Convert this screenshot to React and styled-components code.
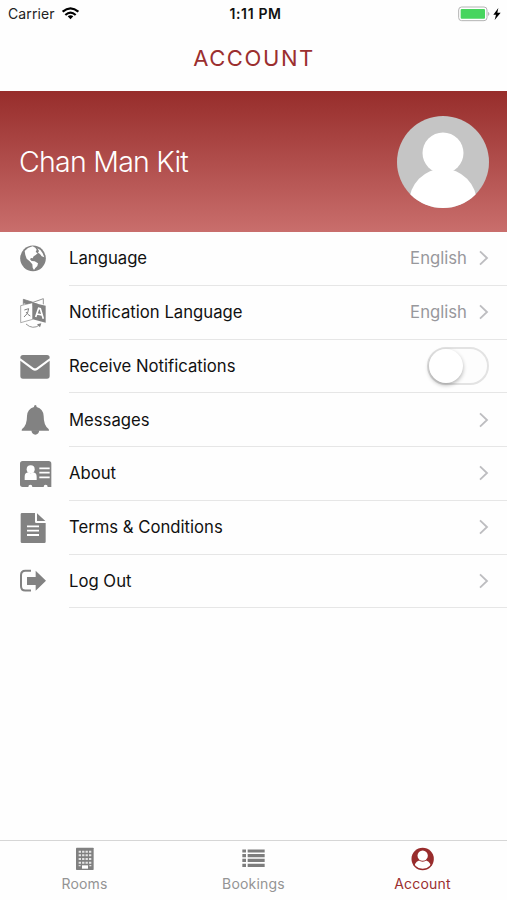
import React, { useState } from "react";
import styled, { createGlobalStyle } from "styled-components";

const GRAY = "#828282";
const RED = "#9b2f2f";

const App = () => {
  const [notify, setNotify] = useState(false);

  return (
    <>
      <GlobalStyle />
      <Screen>
        <StatusBar>
          <Carrier>
            <span>Carrier</span>
            <WifiIcon />
          </Carrier>
          <Clock>1:11 PM</Clock>
          <Power>
            <BatteryIcon />
          </Power>
        </StatusBar>
        <Title>ACCOUNT</Title>
        <Profile>
          <Name>Chan Man Kit</Name>
          <Avatar />
        </Profile>
        <List>
          {rows.map((row) => (
            <Row key={row.label}>
              <IconCell viewBox="0 0 96 96">{row.icon}</IconCell>
              <RowBody>
                <RowLabel>{row.label}</RowLabel>
                {row.value && <RowValue>{row.value}</RowValue>}
                {row.toggle ? (
                  <Toggle
                    role="switch"
                    aria-checked={notify}
                    $on={notify}
                    onClick={() => setNotify(!notify)}
                  >
                    <Knob $on={notify} />
                  </Toggle>
                ) : (
                  <Chevron />
                )}
              </RowBody>
            </Row>
          ))}
        </List>
        <TabBar>
          {tabs.map((tab) => (
            <Tab key={tab.label} $active={tab.active}>
              <TabIcon viewBox="0 0 72 72">{tab.icon}</TabIcon>
              <TabLabel>{tab.label}</TabLabel>
            </Tab>
          ))}
        </TabBar>
      </Screen>
    </>
  );
};

const WifiIcon = () => (
  <svg width="17" height="13" viewBox="0 0 51 39" fill="none" stroke="#000" strokeWidth="6.500">
    <path d="M2 14 Q25.500 -6 49 14" />
    <path d="M10 24 Q25.500 10 41 24" />
    <path d="M17 28 Q25.500 21 34 28 L25.500 37 Z" fill="#000" stroke="none" />
  </svg>
);

const BatteryIcon = () => (
  <svg width="44" height="16" viewBox="0 0 132 48">
    <rect x="2" y="3" width="85" height="41" rx="9" fill="#fff" stroke="#b4b4b4" strokeWidth="3" />
    <rect x="8" y="9" width="73" height="29" rx="3" fill="#47d55e" />
    <path d="M91 17 Q97 23.500 91 30 Z" fill="#999" />
    <path d="M121 6 L106 26 H114 L110 42 L128 20 H118 Z" fill="#000" />
  </svg>
);

const Avatar = () => (
  <svg width="92" height="92" viewBox="0 0 92 92">
    <clipPath id="face">
      <circle cx="46" cy="46" r="46" />
    </clipPath>
    <g clipPath="url(#face)">
      <rect width="92" height="92" fill="#c5c5c5" />
      <circle cx="46" cy="37" r="20.5" fill="#fff" />
      <ellipse cx="46" cy="87.500" rx="34" ry="35" fill="#fff" />
    </g>
  </svg>
);

const Chevron = () => (
  <ChevronSvg viewBox="0 0 30 48">
    <path d="M3 4 L24 24 L3 44" fill="none" stroke="#bdbdc0" strokeWidth="5.500" />
  </ChevronSvg>
);

const globe = (
  <>
    <circle cx="39" cy="46" r="38.500" fill={GRAY} />
    <path
      d="M14 24 L24 15 L38 10 L46 14 L50 20 L47 27 L53 31 L47 36 L41 40 L38 46 L33 45 L30 49 L35 54 L44 55 L54 61 L52 69 L46 75 L42 81 L38 74 L37 64 L29 55 L20 47 L16 36 Z"
      fill="#fff"
    />
    <path d="M52 16 L61 21 L68 31 L73 43 L65 40 L60 33 L54 29 L57 24 Z" fill="#fff" />
  </>
);

const translate = (
  <>
    <path d="M10 23 V7 L39 16 L70 5 V22" fill="none" stroke={GRAY} strokeWidth="2.500" />
    <path d="M10 7 L39 16 L57 22 L39 27 L10 19 Z" fill={GRAY} />
    <path d="M2 26 L38 17 V67 L2 77 Z" fill="#fff" stroke={GRAY} strokeWidth="2" />
    <path d="M38 17 L77 26 V77 L38 67 Z" fill={GRAY} />
    <path
      d="M13 39 L26 35 Q26 50 12 60 M18 45 Q24 54 31 57"
      fill="none"
      stroke={GRAY}
      strokeWidth="3"
    />
    <path d="M47 60 L56 34 L61 35 L70 65 M51 51 L66 54" fill="none" stroke="#fff" strokeWidth="5" />
    <path d="M18 81 Q38 99 59 84" fill="none" stroke={GRAY} strokeWidth="2.500" />
    <path d="M51 82 L64 79 L60 91 Z" fill={GRAY} />
  </>
);

const envelope = (
  <>
    <path d="M9 15 H81 Q89 15 89 23 V25 L50 53 Q45 56 40 53 L1 25 V23 Q1 15 9 15 Z" fill={GRAY} />
    <path d="M1 32 L38 60 Q45 64 52 60 L89 32 V78 Q89 86 81 86 H9 Q1 86 1 78 Z" fill={GRAY} />
  </>
);

const bell = (
  <>
    <path
      d="M42 9 Q42 3 46 3 Q50 3 50 9 Q70 15 71 36 Q71 64 85 74 Q87 76 87 80 H5 Q5 76 7 74 Q21 64 21 36 Q22 15 42 9 Z"
      fill={GRAY}
    />
    <path d="M34 79 H58 Q56 92 46 92 Q36 92 34 79 Z" fill={GRAY} />
  </>
);

const card = (
  <>
    <path
      d="M8 9 H86 Q94 9 94 17 V87 H83 Q83 80 77 80 Q71 80 71 87 H37 Q37 80 31 80 Q25 80 25 87 H8 Q0 87 0 79 V17 Q0 9 8 9 Z"
      fill={GRAY}
    />
    <circle cx="32" cy="34" r="12" fill="#fff" />
    <path d="M14 66 V56 Q14 44 25 43 Q32 49 39 43 Q50 44 50 56 V66 Z" fill="#fff" />
    <path d="M58 31 H89 M58 44 H89 M58 58 H89" stroke="#fff" strokeWidth="5" />
  </>
);

const documentIcon = (
  <>
    <path d="M6 3 H45 V29 Q45 33 49 33 H77 V89 Q77 93 73 93 H6 Q2 93 2 89 V7 Q2 3 6 3 Z" fill={GRAY} />
    <path d="M51 4 L76 27 H51 Z" fill={GRAY} />
    <path d="M21 43 H57 M21 56 H57 M21 69 H57" stroke="#fff" strokeWidth="5.500" />
  </>
);

const logout = (
  <>
    <path d="M33 17.500 H16 Q3 17.500 3 31 V63 Q3 76.500 16 76.500 H33" fill="none" stroke={GRAY} strokeWidth="6" />
    <path d="M21 36 H47 V17 L78 47 L47 77 V60 H21 Z" fill={GRAY} />
  </>
);

const rooms = (
  <>
    <rect x="9" y="2" width="53" height="67" rx="2" fill="#808080" />
    <path
      d="M17 14 H55 M17 25 H55 M17 36 H55 M17 47 H55"
      stroke="#e4e4e4"
      strokeWidth="6"
      strokeDasharray="7 3.300"
    />
    <path d="M17 56 H23 M49 56 H55" stroke="#ddd" strokeWidth="4" />
    <rect x="27" y="55" width="18" height="10" fill="#fff" />
  </>
);

const bookings = (
  <path
    d="M1 12 H12 M17 12 H68 M1 26 H12 M17 26 H68 M1 40 H12 M17 40 H68 M1 55 H12 M17 55 H68"
    stroke="#7d7d7d"
    strokeWidth="9.500"
  />
);

const account = (
  <>
    <clipPath id="ring">
      <circle cx="35" cy="36" r="29.500" />
    </clipPath>
    <circle cx="35" cy="36" r="33.500" fill="#982c2c" />
    <g clipPath="url(#ring)">
      <ellipse cx="35" cy="60" rx="25" ry="22" fill="#fff" />
      <circle cx="35" cy="27" r="17.500" fill="#982c2c" />
      <circle cx="35" cy="26" r="15.500" fill="#fff" />
    </g>
  </>
);

const rows = [
  { label: "Language", value: "English", icon: globe },
  { label: "Notification Language", value: "English", icon: translate },
  { label: "Receive Notifications", toggle: true, icon: envelope },
  { label: "Messages", icon: bell },
  { label: "About", icon: card },
  { label: "Terms & Conditions", icon: documentIcon },
  { label: "Log Out", icon: logout },
];

const tabs = [
  { label: "Rooms", icon: rooms },
  { label: "Bookings", icon: bookings },
  { label: "Account", icon: account, active: true },
];

const GlobalStyle = createGlobalStyle`
  * {
    box-sizing: border-box;
  }

  body {
    margin: 0;
    background: #fff;
    font-family: Inter, "Liberation Sans", sans-serif;
  }
`;

const Screen = styled.div`
  display: flex;
  flex-direction: column;
  width: 507px;
  height: 900px;
  overflow: hidden;
  background: #fefefe;
`;

const StatusBar = styled.div`
  display: grid;
  grid-template-columns: 1fr auto 1fr;
  align-items: center;
  height: 27px;
  padding: 0 5px 0 8px;
  font-size: 14px;
  color: #222;
`;

const Carrier = styled.div`
  display: flex;
  align-items: center;
  gap: 7px;
  letter-spacing: 0.1px;
`;

const Clock = styled.div`
  padding-left: 1px;
  font-weight: 600;
  letter-spacing: 0.65px;
  color: #111;
`;

const Power = styled.div`
  display: flex;
  justify-content: flex-end;
`;

const Title = styled.h1`
  margin: 0;
  height: 64px;
  padding-left: 1px;
  line-height: 63px;
  font-size: 22px;
  font-weight: 400;
  letter-spacing: 1.6px;
  text-align: center;
  color: ${RED};
`;

const Profile = styled.div`
  display: flex;
  flex: none;
  align-items: center;
  justify-content: space-between;
  height: 141px;
  padding: 0 18px 0 19px;
  background: linear-gradient(#972d2b, #c96e6c);
`;

const Name = styled.div`
  font-size: 28.5px;
  font-weight: 300;
  letter-spacing: -0.75px;
  color: #fff;
`;

const List = styled.div`
  flex: 1;
`;

const Row = styled.div`
  display: flex;
  align-items: center;
  height: 53.75px;
  padding-left: 20px;
`;

const IconCell = styled.svg`
  flex: none;
  width: 32px;
  height: 32px;
  margin-right: 17px;
`;

const RowBody = styled.div`
  display: flex;
  flex: 1;
  align-items: center;
  height: 100%;
  padding-right: 18px;
  border-bottom: 1px solid #e6e6e6;
`;

const RowLabel = styled.div`
  flex: 1;
  font-size: 16.7px;
  color: #111;
`;

const RowValue = styled.div`
  margin-right: 12px;
  font-size: 16.7px;
  color: #98989c;
`;

const ChevronSvg = styled.svg`
  width: 10px;
  height: 16px;
`;

const Toggle = styled.div`
  width: 62px;
  height: 38px;
  padding: 1px;
  border: 2px solid #e3e3e3;
  border-radius: 19px;
  background: ${(props) => (props.$on ? "#4cd964" : "#fdfdfd")};
`;

const Knob = styled.div`
  width: 34px;
  height: 34px;
  margin: -1px 0 0 ${(props) => (props.$on ? "24px" : "-1px")};
  border-radius: 50%;
  background: #fff;
  box-shadow: 0 2px 4px rgba(0, 0, 0, 0.3);
`;

const TabBar = styled.div`
  display: flex;
  flex: none;
  height: 60px;
  border-top: 1px solid #d6d6d6;
`;

const Tab = styled.div`
  display: flex;
  flex: 1;
  flex-direction: column;
  align-items: center;
  padding-top: 6px;
  color: ${(props) => (props.$active ? RED : "#949494")};
`;

const TabIcon = styled.svg`
  width: 24px;
  height: 24px;
`;

const TabLabel = styled.div`
  margin-top: 4px;
  font-size: 14px;
  line-height: 18px;
  letter-spacing: 0.2px;
`;

export default App;
